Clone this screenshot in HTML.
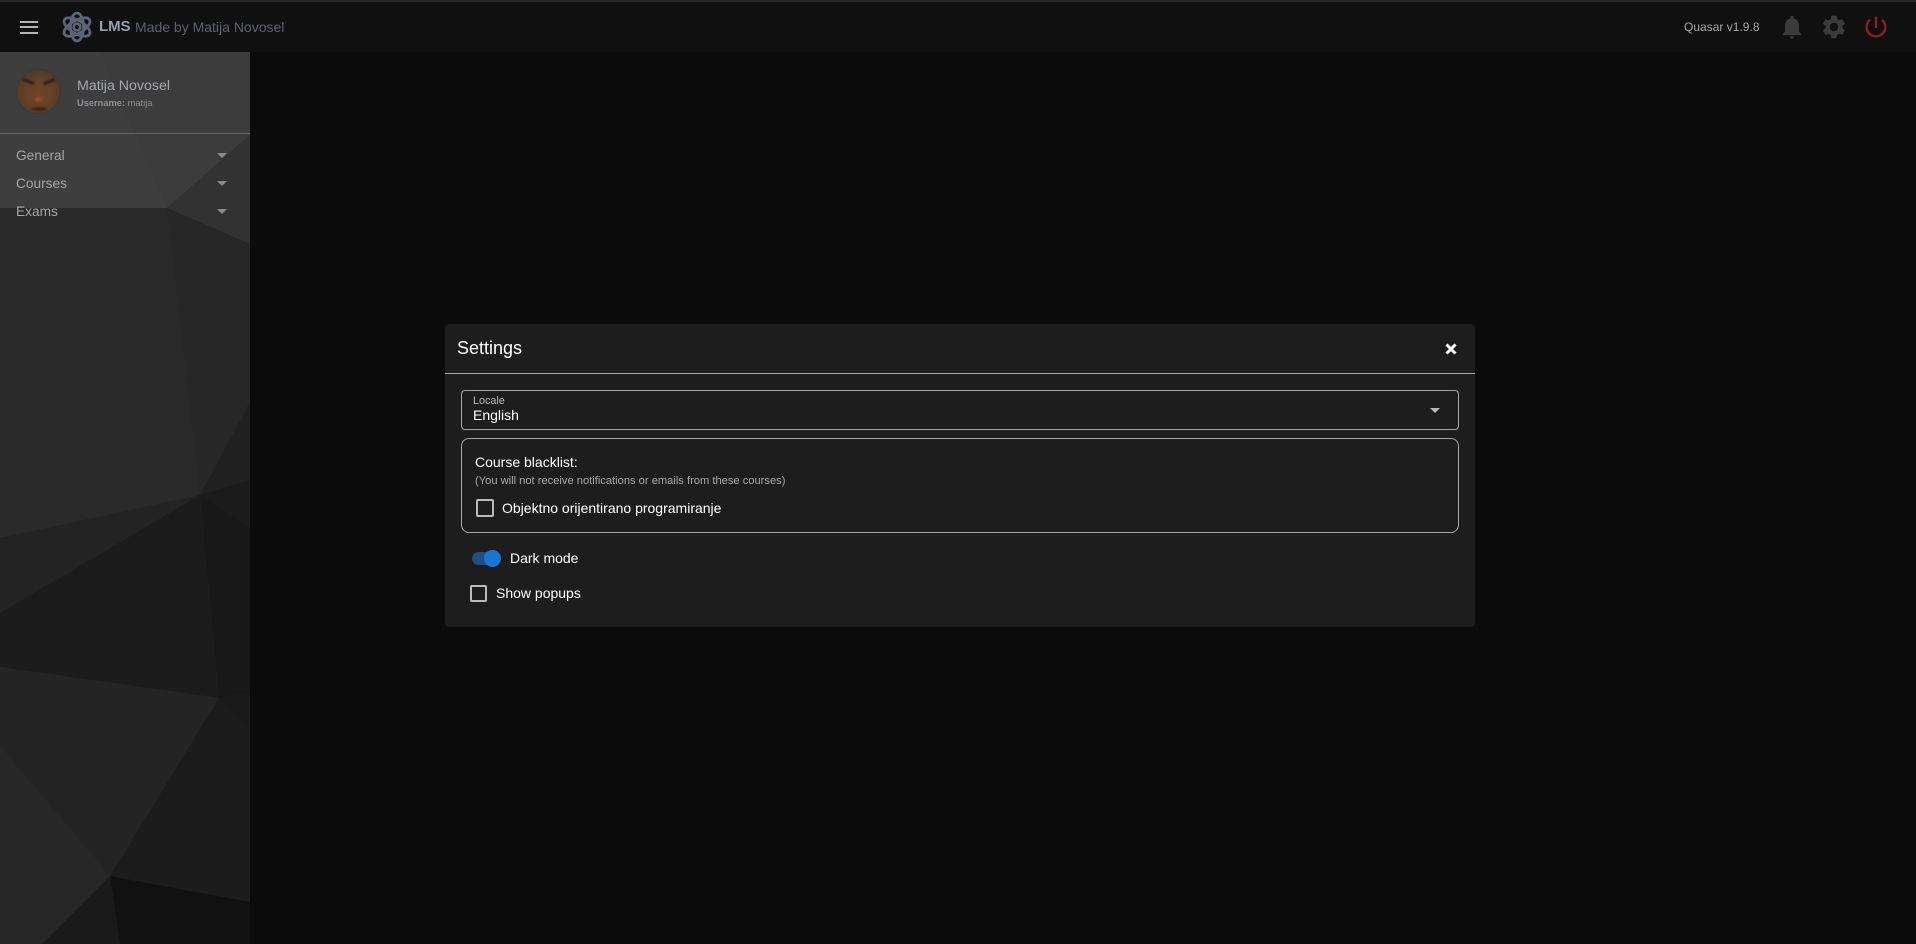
<!DOCTYPE html>
<html><head><meta charset="utf-8"><style>
html,body{margin:0;padding:0;width:1916px;height:944px;overflow:hidden;background:#0b0b0b;font-family:"Liberation Sans",sans-serif}
.a{position:absolute;white-space:nowrap}
svg{position:absolute;display:block}
</style></head><body>
<div class="a" style="left:0;top:0;width:1916px;height:52px;background:#101010;border-top:2px solid #272727;box-sizing:border-box"></div>
<div class="a" style="left:20px;top:21px;width:18px;height:2px;background:#b4b4b4"></div>
<div class="a" style="left:20px;top:26px;width:18px;height:2px;background:#b4b4b4"></div>
<div class="a" style="left:20px;top:32px;width:18px;height:2px;background:#b4b4b4"></div>
<svg style="left:61px;top:11px" width="32" height="32" viewBox="0 0 32 32" fill="none" stroke="#5b6577" stroke-width="2.8"><ellipse cx="16" cy="16" rx="14.500" ry="6.500" transform="rotate(30 16 16)"/><ellipse cx="16" cy="16" rx="14.500" ry="6.500" transform="rotate(-30 16 16)"/><ellipse cx="16" cy="16" rx="6.500" ry="14"/><circle cx="16" cy="16" r="3.400" stroke-width="2.600"/></svg>
<div class="a" style="left:99px;top:17px;font-size:15px;line-height:20px;font-weight:bold;color:#98a0ad;letter-spacing:-.1px">LMS</div>
<div class="a" style="left:135px;top:17px;font-size:14px;line-height:20px;color:#5e6268">Made by Matija Novosel</div>
<div class="a" style="left:1684px;top:19px;font-size:12px;line-height:16px;color:#a3a6aa;letter-spacing:.01px">Quasar v1.9.8</div>
<svg style="left:1778px;top:13px" width="28" height="28" viewBox="0 0 24 24" fill="#3c3c3c"><path d="M12 22c1.100 0 2-.9 2-2h-4c0 1.100.89 2 2 2zm6-6v-5c0-3.070-1.640-5.640-4.500-6.320V4c0-.83-.67-1.500-1.500-1.500s-1.500.67-1.500 1.500v.68C7.630 5.360 6 7.920 6 11v5l-2 2v1h16v-1l-2-2z"/></svg>
<svg style="left:1820px;top:13px" width="28" height="28" viewBox="0 0 24 24" fill="#3c3c3c"><path d="M19.140,12.940c0.040-0.300,0.060-0.610,0.060-0.940c0-0.320-0.020-0.640-0.070-0.940l2.030-1.580c0.180-0.140,0.230-0.410,0.120-0.610l-1.920-3.320c-0.120-0.220-0.370-0.290-0.590-0.220l-2.390,0.960c-0.500-0.380-1.030-0.700-1.620-0.940L14.400,2.810c-0.040-0.240-0.240-0.410-0.480-0.410h-3.840c-0.240,0-0.430,0.170-0.470,0.410L9.250,5.350C8.660,5.590,8.120,5.920,7.630,6.290L5.240,5.330c-0.220-0.080-0.470,0-0.590,0.220L2.740,8.870C2.620,9.080,2.660,9.340,2.860,9.480l2.030,1.580C4.840,11.360,4.800,11.690,4.800,12s0.020,0.640,0.070,0.940l-2.030,1.580c-0.180,0.140-0.230,0.410-0.120,0.610l1.920,3.320c0.120,0.220,0.370,0.290,0.590,0.220l2.390-0.960c0.500,0.380,1.030,0.700,1.620,0.940l0.360,2.540c0.050,0.240,0.240,0.410,0.480,0.410h3.840c0.240,0,0.440-0.170,0.470-0.410l0.360-2.540c0.590-0.240,1.130-0.560,1.620-0.940l2.390,0.960c0.220,0.080,0.470,0,0.590-0.220l1.920-3.320c0.120-0.220,0.070-0.470-0.120-0.610L19.140,12.940z M12,15.600c-1.980,0-3.600-1.620-3.600-3.600s1.620-3.600,3.600-3.600s3.600,1.620,3.600,3.600S13.980,15.600,12,15.600z"/></svg>
<svg style="left:1862px;top:13px" width="28" height="28" viewBox="0 0 24 24" fill="#8a2020"><path d="M13 3h-2v10h2V3zm4.830 2.170l-1.420 1.420C17.990 7.860 19 9.810 19 12c0 3.870-3.130 7-7 7s-7-3.130-7-7c0-2.190 1.010-4.140 2.580-5.420L6.170 5.170C4.230 6.820 3 9.260 3 12c0 4.970 4.030 9 9 9s9-4.030 9-9c0-2.740-1.230-5.180-3.170-6.830z"/></svg>

<svg style="left:0;top:52px" width="250" height="892" viewBox="0 52 250 892">
<rect x="0" y="52" width="250" height="892" fill="#2a2a2a"/>
<polygon points="0,52 250,52 250,135 167,208 0,208" fill="#3c3c3c"/>
<polygon points="0,52 100,52 167,208 0,208" fill="#3e3e3e"/>
<polygon points="167,208 250,135 250,244" fill="#323232"/>
<polygon points="0,208 167,208 200,495 0,538" fill="#2a2a2a"/>
<polygon points="167,208 250,244 250,402 200,495" fill="#272727"/>
<polygon points="200,495 250,402 250,480" fill="#202020"/>
<polygon points="200,495 250,480 250,527" fill="#1b1b1b"/>
<polygon points="0,538 200,495 0,613" fill="#232323"/>
<polygon points="0,613 200,495 219,698 0,667" fill="#1c1c1c"/>
<polygon points="200,495 250,527 250,693 219,698" fill="#181818"/>
<polygon points="219,698 250,693 250,731" fill="#1a1a1a"/>
<polygon points="0,667 219,698 110,876 0,746" fill="#242424"/>
<polygon points="0,746 110,876 42,944 0,944" fill="#272727"/>
<polygon points="219,698 250,731 250,902 110,876" fill="#1c1c1c"/>
<polygon points="110,876 250,902 250,944 120,944" fill="#111111"/>
<polygon points="110,876 120,944 42,944" fill="#1a1a1a"/>
</svg>
<div class="a" style="left:16px;top:69px;width:45px;height:45px;border-radius:50%;background:radial-gradient(circle at 50% 55%,#6f4524 0,#664226 40%,#4e362a 85%,#3a2f29 100%);overflow:hidden;box-sizing:border-box;border:1px solid #3a3a3a">
<div style="position:absolute;left:5px;top:10px;width:13px;height:3px;background:#2a1e16;transform:rotate(22deg);filter:blur(1px)"></div>
<div style="position:absolute;left:26px;top:10px;width:13px;height:3px;background:#2a1e16;transform:rotate(-22deg);filter:blur(1px)"></div>
<div style="position:absolute;left:18px;top:27px;width:8px;height:5px;border-radius:50%;background:#9a4a28;filter:blur(1px)"></div>
<div style="position:absolute;left:14px;top:37px;width:16px;height:4px;border-radius:50%;background:#3a2414;filter:blur(1px)"></div>
</div>
<div class="a" style="left:77px;top:77px;font-size:14.200px;line-height:18px;color:#a4a7ac">Matija Novosel</div>
<div class="a" style="left:77px;top:97px;font-size:9.300px;line-height:12px;color:#8d9095"><b>Username:</b> matija</div>
<div class="a" style="left:0;top:133px;width:250px;height:1px;background:#636363"></div>
<div class="a" style="left:16px;top:147px;font-size:13.700px;line-height:18px;color:#a6a6a6">General</div>
<div class="a" style="left:16px;top:175px;font-size:13.700px;line-height:18px;color:#a6a6a6">Courses</div>
<div class="a" style="left:16px;top:203px;font-size:13.700px;line-height:18px;color:#a6a6a6">Exams</div>
<div class="a" style="left:217px;top:153px;border-left:5px solid transparent;border-right:5px solid transparent;border-top:5px solid #8a8a8a"></div>
<div class="a" style="left:217px;top:181px;border-left:5px solid transparent;border-right:5px solid transparent;border-top:5px solid #8a8a8a"></div>
<div class="a" style="left:217px;top:209px;border-left:5px solid transparent;border-right:5px solid transparent;border-top:5px solid #8a8a8a"></div>

<div class="a" style="left:445px;top:324px;width:1030px;height:303px;background:#1d1d1d;border-radius:4px"></div>
<div class="a" style="left:457px;top:336px;font-size:18px;line-height:24px;color:#fff">Settings</div>
<svg style="left:1444px;top:342px" width="14" height="14" viewBox="0 0 14 14" stroke="#fff" stroke-width="3"><path d="M2.500 2.500L11.500 11.500M11.500 2.500L2.500 11.500"/></svg>
<div class="a" style="left:445px;top:373px;width:1030px;height:1px;background:#a8a8a8"></div>

<div class="a" style="left:461px;top:390px;width:998px;height:40px;box-sizing:border-box;border:1px solid #a4a4a4;border-radius:4px"></div>
<div class="a" style="left:473px;top:394px;font-size:10.800px;line-height:14px;color:#b8b8b8">Locale</div>
<div class="a" style="left:473px;top:406px;font-size:14px;line-height:18px;color:#fff">English</div>
<div class="a" style="left:1430px;top:408px;border-left:5px solid transparent;border-right:5px solid transparent;border-top:5px solid #b8b8b8"></div>

<div class="a" style="left:461px;top:438px;width:998px;height:95px;box-sizing:border-box;border:1px solid #a4a4a4;border-radius:8px"></div>
<div class="a" style="left:475px;top:453px;font-size:14px;line-height:18px;color:#fff">Course blacklist:</div>
<div class="a" style="left:475px;top:474px;font-size:11.150px;line-height:14px;color:#a8a8a8">(You will not receive notifications or emails from these courses)</div>
<div class="a" style="left:476px;top:499px;width:18px;height:18px;box-sizing:border-box;border:2px solid #bcbcbc;border-radius:2px"></div>
<div class="a" style="left:502px;top:499px;font-size:14px;line-height:18px;color:#fff">Objektno orijentirano programiranje</div>

<div class="a" style="left:472px;top:552px;width:26px;height:13px;border-radius:7px;background:#1b4f86"></div>
<div class="a" style="left:484px;top:550px;width:17px;height:17px;border-radius:50%;background:#1976d2"></div>
<div class="a" style="left:510px;top:549px;font-size:14px;line-height:18px;color:#fff">Dark mode</div>
<div class="a" style="left:470px;top:585px;width:17px;height:17px;box-sizing:border-box;border:2px solid #bcbcbc;border-radius:2px"></div>
<div class="a" style="left:496px;top:584px;font-size:14px;line-height:18px;color:#fff">Show popups</div>
</body></html>
